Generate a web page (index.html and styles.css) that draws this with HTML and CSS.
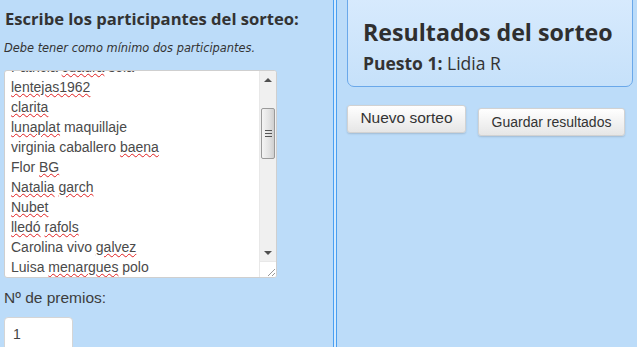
FILE: index.html
```
<!DOCTYPE html>
<html lang="es">
<head>
    <meta charset="UTF-8">
    <title>Sorteo</title>
    <link rel="stylesheet" href="styles.css">
</head>
<body>
    <div class="page">
        <!-- columna de participantes -->
        <div class="left-col">
            <h2 class="section-title">Escribe los participantes del sorteo:</h2>
            <p class="hint">Debe tener como mínimo dos participantes.</p>

            <div class="names-box">
                <div class="names-list">
                    <div>Patricia <span class="typo">cuadra</span> sola</div>
                    <div><span class="typo">lentejas1962</span></div>
                    <div><span class="typo">clarita</span></div>
                    <div><span class="typo">lunaplat</span> maquillaje</div>
                    <div>virginia caballero <span class="typo">baena</span></div>
                    <div>Flor <span class="typo">BG</span></div>
                    <div><span class="typo">Natalia</span> <span class="typo">garch</span></div>
                    <div><span class="typo">Nubet</span></div>
                    <div><span class="typo">lledó</span> <span class="typo">rafols</span></div>
                    <div>Carolina vivo <span class="typo">galvez</span></div>
                    <div>Luisa <span class="typo">menargues</span> polo</div>
                </div>
                <div class="scrollbar">
                    <div class="sb-arrow up"></div>
                    <div class="sb-track">
                        <div class="sb-thumb"><span></span><span></span><span></span></div>
                    </div>
                    <div class="sb-arrow down"></div>
                    <div class="sb-corner">
                        <svg width="10" height="10" viewBox="0 0 10 10">
                            <path d="M9 2 L2 9 M9 6 L6 9" stroke="#999" stroke-width="1" fill="none"/>
                        </svg>
                    </div>
                </div>
            </div>

            <label class="prize-label">Nº de premios:</label>
            <div class="prize-input">1</div>
        </div>

        <div class="divider"></div>

        <!-- columna de resultados -->
        <div class="right-col">
            <div class="result-box">
                <h1 class="result-title">Resultados del sorteo</h1>
                <div class="result-line"><b>Puesto 1:</b> Lidia R</div>
            </div>
            <div class="actions">
                <button class="btn btn-new">Nuevo sorteo</button>
                <button class="btn btn-save">Guardar resultados</button>
            </div>
        </div>
    </div>
</body>
</html>
```

FILE: styles.css
```
* {
    margin: 0;
    padding: 0;
    box-sizing: border-box;
}

body {
    width: 637px;
    height: 347px;
    background: #bcdcf9;
    font-family: "Liberation Sans", Arial, sans-serif;
    color: #333;
    overflow: hidden;
}

.page {
    display: flex;
    height: 100%;
}

.left-col {
    width: 333px;
    padding: 8px 0 0 4px;
}

.section-title {
    font-family: "Open Sans", sans-serif;
    font-size: 16.6px;
    font-weight: 700;
    color: #333;
    line-height: 22px;
    padding-left: 1px;
}

.hint {
    font-family: "DejaVu Sans", sans-serif;
    font-style: italic;
    font-size: 11.4px;
    color: #333;
    margin-top: 11px;
}

.names-box {
    margin-top: 15px;
    width: 273px;
    height: 208px;
    background: #fff;
    border: 1px solid #cfcfcf;
    border-radius: 3px;
    display: flex;
    overflow: hidden;
}

.names-list {
    flex: 1;
    padding-left: 6px;
    margin-top: -14px;
    font-size: 14px;
    line-height: 20px;
    color: #4a4a4a;
    white-space: nowrap;
}

.typo {
    text-decoration: underline wavy #e02020;
    text-decoration-thickness: 1px;
    text-underline-offset: 1px;
}

.scrollbar {
    width: 17px;
    display: flex;
    flex-direction: column;
    background: #f0f0f0;
    border-left: 1px solid #e8e8e8;
}

.sb-arrow {
    height: 17px;
    display: flex;
    align-items: center;
    justify-content: center;
}

.sb-arrow::after {
    content: "";
    border-left: 4px solid transparent;
    border-right: 4px solid transparent;
}

.sb-arrow.up::after {
    border-bottom: 4px solid #505050;
}

.sb-arrow.down::after {
    border-top: 4px solid #505050;
}

.sb-track {
    flex: 1;
    padding-top: 20px;
}

.sb-thumb {
    height: 51px;
    margin: 0 1px;
    border: 1px solid #9a9a9a;
    border-radius: 2px;
    background: linear-gradient(to right, #f4f4f4, #e2e2e2 60%, #cfcfcf);
    display: flex;
    flex-direction: column;
    align-items: center;
    justify-content: center;
    gap: 2px;
}

.sb-thumb span {
    width: 7px;
    height: 1px;
    background: #555;
}

.sb-corner {
    height: 16px;
    background: #fff;
    border-top: 1px solid #e8e8e8;
    display: flex;
    align-items: flex-end;
    justify-content: flex-end;
}

.prize-label {
    display: block;
    margin-top: 11px;
    font-size: 15.5px;
    color: #3d3d3d;
}

.prize-input {
    margin-top: 10px;
    width: 69px;
    height: 34px;
    background: #fff;
    border: 1px solid #d5d5d5;
    border-radius: 4px;
    padding: 8px 0 0 8px;
    font-size: 14px;
    color: #444;
}

.divider {
    width: 4px;
    border-left: 1px solid #4a9ff2;
    border-right: 1px solid #4a9ff2;
    background: #d4eafd;
}

.right-col {
    flex: 1;
    padding-left: 10px;
}

.result-box {
    width: 286px;
    height: 89px;
    margin-top: -2px;
    background: linear-gradient(to bottom, #d7eafd, #c6e1fa);
    border: 1px solid #6aa8ea;
    border-radius: 0 0 7px 7px;
    padding: 18px 0 0 15px;
}

.result-title {
    font-family: "Open Sans", sans-serif;
    font-size: 23.2px;
    font-weight: 700;
    line-height: 30px;
    color: #2f2f2f;
}

.result-line {
    font-family: "Open Sans", sans-serif;
    font-size: 17.5px;
    line-height: 26px;
    margin-top: 3px;
    color: #333;
}

.actions {
    display: flex;
    align-items: flex-start;
    gap: 12px;
    margin-top: 18px;
}

.btn {
    font-family: "Liberation Sans", Arial, sans-serif;
    font-size: 14px;
    color: #333;
    height: 28px;
    padding: 0 12px;
    background: linear-gradient(to bottom, #ffffff, #e6e6e6);
    border: 1px solid #d2d2d2;
    border-radius: 3px;
    box-shadow: 0 1px 2px rgba(0, 0, 0, 0.15);
}

.btn-new {
    font-size: 15.5px;
    width: 119px;
    padding: 0 0 2px;
}

.btn-save {
    margin-top: 3px;
    width: 147px;
}
```
